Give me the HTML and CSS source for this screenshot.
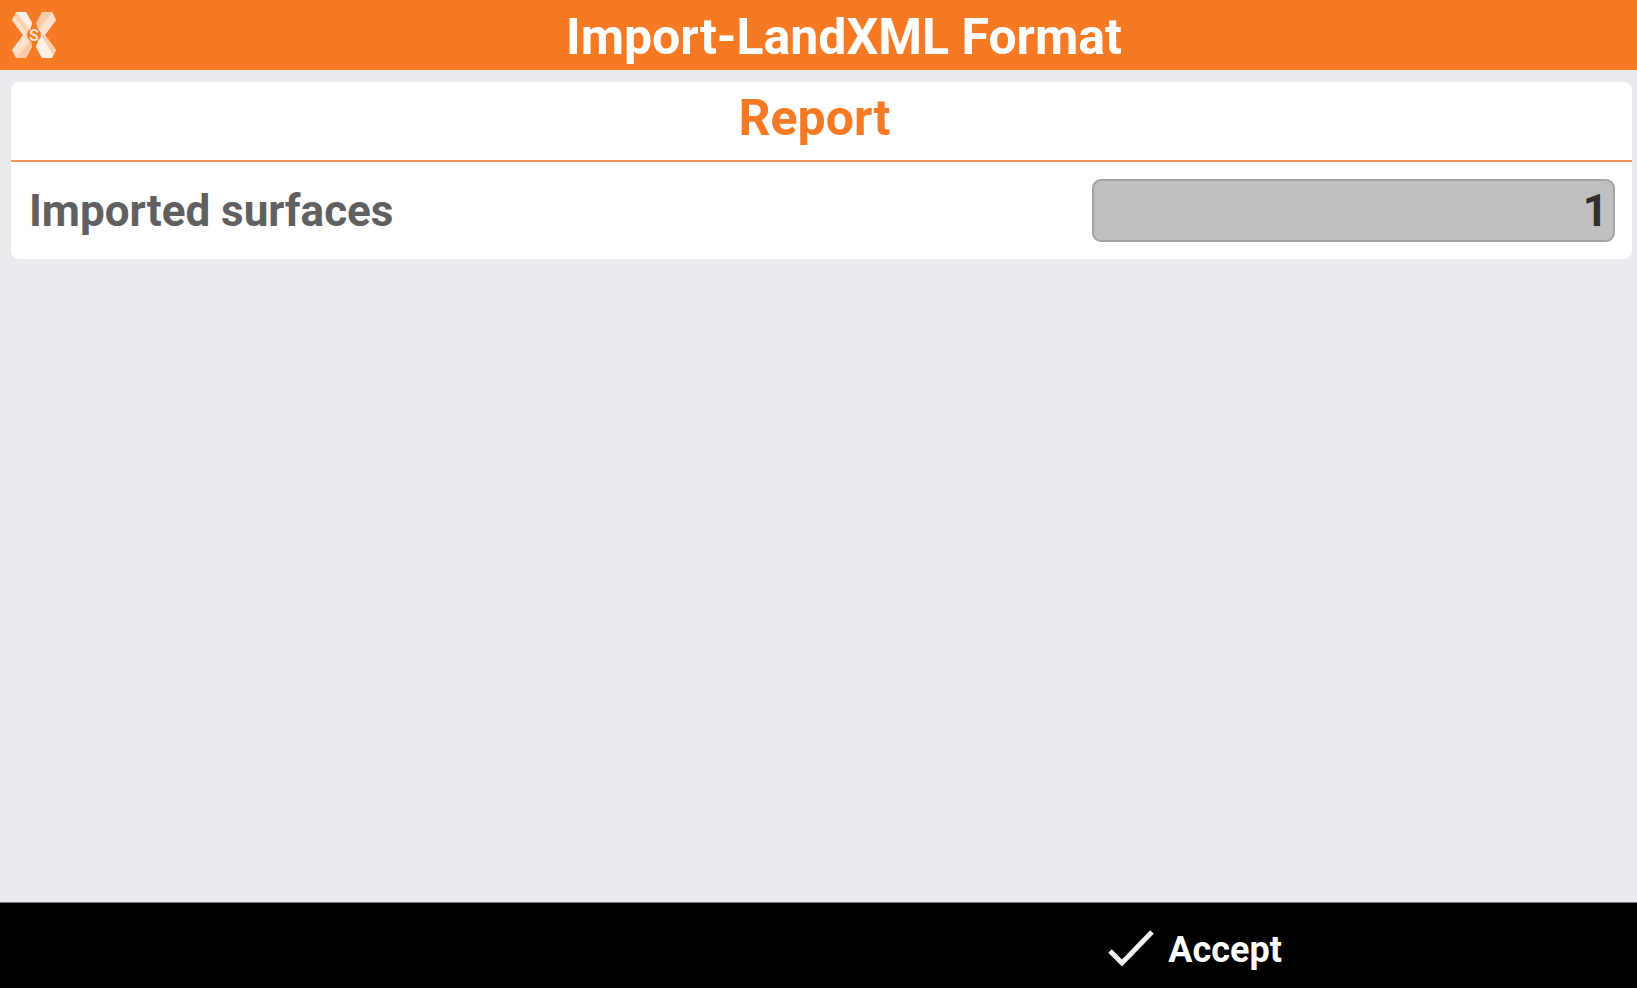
FILE: index.html
```html
<!DOCTYPE html>
<html lang="en">
<head>
    <meta charset="UTF-8">
    <meta name="viewport" content="width=device-width, initial-scale=1.0">
    <title>Import-LandXML Format</title>
    <link rel="stylesheet" href="styles.css">
</head>
<body>
    <header class="title-bar">
        <svg class="logo" viewBox="0 0 46 48" aria-hidden="true">
            <!-- left arms -->
            <path fill="#fcd0b0" d="M5 1H15L21 12L17 24H12L1 9Z"/>
            <path fill="#fff1e6" d="M5 1H15L21 12L19 19Z"/>
            <path fill="#fde1cd" d="M1 9L3 5L17 24H12Z"/>
            <path fill="#fde1cd" d="M12 24H17L21 36L15 47H5L1 39Z"/>
            <path fill="#fcc9a5" d="M20 29L21 36L15 47H5Z"/>
            <!-- right arms -->
            <path fill="#fcc9a5" d="M31 1H41L45 9L34 24H29L25 12Z"/>
            <path fill="#fde1cd" d="M41 1L45 9L34 24H29L27 20Z"/>
            <path fill="#fff1e6" d="M29 24H34L45 39L41 47H31L25 36Z"/>
            <path fill="#fcd0b0" d="M30 24H34L45 39L42 44Z"/>
            <circle cx="23" cy="24" r="7" fill="#f67a23"/>
            <text x="23" y="30" class="logo-letter">S</text>
        </svg>
        <h1>Import-LandXML Format</h1>
    </header>

    <main>
        <section class="card">
            <h2>Report</h2>
            <div class="row">
                <label for="surfaces">Imported surfaces</label>
                <input type="text" id="surfaces" value="1" readonly>
            </div>
        </section>
    </main>

    <footer class="actions">
        <button type="button" class="accept">
            <svg class="check" viewBox="0 0 46 40" aria-hidden="true">
                <path d="M2 21L14 33L44 2"/>
            </svg>
            Accept
        </button>
    </footer>
</body>
</html>
```

FILE: styles.css
```css
:root {
    --primary-color: #f67a23;
    --background-color: #e9eaee;
    --label-color: #606060;
}
* {
    box-sizing: border-box;
}
body {
    font-family: Roboto, "Liberation Sans", sans-serif;
    font-weight: bold;
    background-color: var(--background-color);
    margin: 0;
    min-height: 100vh;
    display: flex;
    flex-direction: column;
}
h1,
h2 {
    margin: 0;
    font-size: 50px;
    line-height: 60px;
    text-align: center;
}
.title-bar {
    display: flex;
    align-items: center;
    height: 70px;
    padding: 0 6px 0 11px;
    background-color: var(--primary-color);
    color: #fff;
}
.title-bar h1 {
    flex: 1;
    padding-top: 4px;
}
.logo {
    width: 46px;
    height: 48px;
}
.logo-letter {
    font-size: 16px;
    text-anchor: middle;
    fill: #fde1cd;
}
main {
    flex: 1;
    padding: 12px 5px 12px 11px;
}
.card {
    background-color: #fff;
    border-radius: 8px;
}
.card h2 {
    padding: 6px 14px 12px 0;
    color: var(--primary-color);
    border-bottom: 2px solid #ed9150;
}
.row {
    display: flex;
    justify-content: space-between;
    align-items: center;
    padding: 17px 17px 17px 18px;
    font-size: 44px;
    color: var(--label-color);
}
.row input {
    width: 33%;
    height: 63px;
    padding: 0 5px;
    font: inherit;
    text-align: right;
    color: #303030;
    background-color: #bfbfbf;
    border: 2px solid #a3a3a3;
    border-radius: 9px;
}
.actions {
    display: grid;
    grid-template-columns: 2fr 1fr;
    height: 86px;
    background-color: #000;
    border-top: 1px solid #77787a;
}
.accept {
    grid-column: 2;
    display: flex;
    align-items: center;
    gap: 14px;
    padding: 8px 17px 0;
    font: inherit;
    font-size: 36px;
    color: #fff;
    background: none;
    border: none;
    cursor: pointer;
}
.check {
    width: 46px;
    height: 40px;
    fill: none;
    stroke: #f2f2f2;
    stroke-width: 5;
}
```
